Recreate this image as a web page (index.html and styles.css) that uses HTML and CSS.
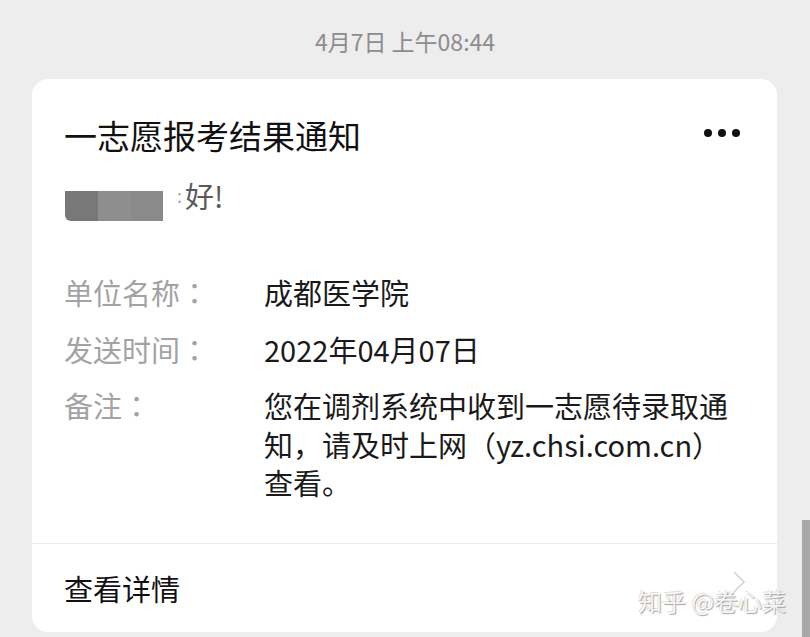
FILE: index.html
```html
<!DOCTYPE html>
<html lang="zh-CN">
<head>
  <meta charset="UTF-8" />
  <title>一志愿报考结果通知</title>
  <link rel="stylesheet" href="styles.css">
</head>
<body>

  <div class="time">4月7日 上午08:44</div>

  <div class="card">
    <div class="card-body">
      <div class="head">
        <h1 class="title">一志愿报考结果通知</h1>
        <div class="more" aria-label="更多">
          <span></span><span></span><span></span>
        </div>
      </div>

      <div class="greet">
        <div class="blur">
          <span class="b1"></span><span class="b2"></span><span class="b3"></span>
        </div>
        <span class="cut">:</span>
        <span class="hello">好!</span>
      </div>

      <div class="rows">
        <div class="label">单位名称<span class="punct" lang="zh-TW">：</span></div>
        <div class="value">成都医学院</div>

        <div class="label">发送时间<span class="punct" lang="zh-TW">：</span></div>
        <div class="value">2022年04月07日</div>

        <div class="label">备注<span class="punct" lang="zh-TW">：</span></div>
        <div class="value">您在调剂系统中收到一志愿待录取通知，请及时上网（yz.chsi.com.cn）查看。</div>
      </div>
    </div>

    <div class="foot">
      <span>查看详情</span>
      <svg class="arrow" width="14" height="24" viewBox="0 0 14 24">
        <path d="M2 2 L12 12 L2 22" fill="none" stroke="#d4d4d4" stroke-width="1.6"/>
      </svg>
    </div>
  </div>

  <!-- 水印 -->
  <div class="mark">知乎 @卷心菜</div>
  <div class="scroll"></div>

</body>
</html>
```

FILE: styles.css
```css
* {
  margin: 0; padding: 0; box-sizing: border-box;
}
html, body {
  height: 100%;
  overflow: hidden;
}
body {
  background: #ededed;
  font-family: "Noto Sans CJK SC", "Noto Sans", sans-serif;
  color: #1a1a1a;
  position: relative;
}

/* 时间 */
.time {
  padding-top: 26px;
  height: 79px;
  line-height: 30px;
  font-size: 23px;
  color: #8c8c8c;
  text-align: center;
}

/* 卡片 */
.card {
  margin: 0 33px 0 32px;
  background: #fff;
  border-radius: 16px;
  height: 553px;
}
.card-body {
  padding: 34px 32px 41px 32px;
  border-bottom: 1px solid #ebebeb;
}
.head {
  display: flex;
  align-items: center;
  justify-content: space-between;
}
.title {
  font-size: 33px;
  font-weight: 400;
  line-height: 44px;
  color: #111;
}
.more {
  display: flex;
  gap: 6px;
  margin-right: 5px;
  margin-top: -4px;
}
.more span {
  width: 8px;
  height: 8px;
  border-radius: 50%;
  background: #111;
}

/* 问候 */
.greet {
  margin-top: 18px;
  height: 40px;
  display: flex;
  align-items: center;
}
.blur {
  display: flex;
  margin-left: 1px;
  margin-top: 22px;
  height: 30px;
}
.blur span {
  display: block;
  height: 30px;
}
.b1 { width: 33px; background: #787878; border-radius: 0 0 0 6px; }
.b2 { width: 33px; background: #8e8e8e; }
.b3 { width: 32px; background: #8a8a8a; }
.cut {
  margin-left: 14px;
  font-size: 18px;
  color: #aaa;
  width: 6px;
  overflow: hidden;
}
.hello {
  font-size: 29px;
  line-height: 40px;
  color: #5a5a5a;
  margin-left: 2px;
}

/* 内容行 */
.rows {
  margin-top: 58px;
  display: grid;
  grid-template-columns: 200px 1fr;
  row-gap: 18px;
  font-size: 29px;
  line-height: 38.5px;
}
.label {
  color: #a3a3a3;
}
.value {
  color: #1a1a1a;
}

/* 底部 */
.foot {
  height: 89px;
  padding: 0 31px 0 32px;
  display: flex;
  align-items: center;
  justify-content: space-between;
  font-size: 29px;
  color: #111;
}
.arrow {
  margin-top: -12px;
}

/* 水印 */
.mark {
  position: absolute;
  left: 638px;
  top: 586px;
  font-size: 24px;
  line-height: 30px;
  color: rgba(255, 255, 255, 0.85);
  text-shadow: 1px 1px 1px rgba(0, 0, 0, 0.35), -1px -1px 0 rgba(0, 0, 0, 0.12);
  white-space: nowrap;
}
.scroll {
  position: absolute;
  right: 0;
  top: 520px;
  width: 8px;
  height: 117px;
  background: #a8a8a8;
}
```
